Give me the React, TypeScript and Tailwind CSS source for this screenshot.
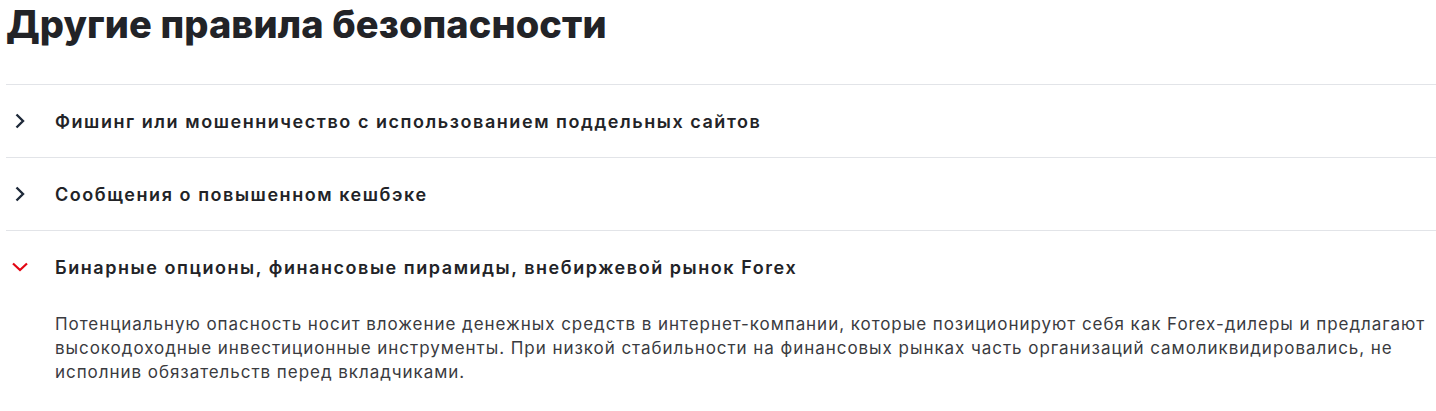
import React from "react";

const Chevron = ({ open }: { open: boolean }) =>
  open ? (
    <svg width="20" height="20" viewBox="0 0 20 20" fill="none" className="shrink-0">
      <path d="M3 6.5 L10 13 L17 6.5" stroke="#e30613" strokeWidth="2.2" />
    </svg>
  ) : (
    <svg width="20" height="20" viewBox="0 0 20 20" fill="none" className="shrink-0">
      <path d="M6.5 3.5 L13 10 L6.5 16.5" stroke="#1f2a3a" strokeWidth="2.4" />
    </svg>
  );

const items = [
  { title: "Фишинг или мошенничество с использованием поддельных сайтов", open: false },
  { title: "Сообщения о повышенном кешбэке", open: false },
  { title: "Бинарные опционы, финансовые пирамиды, внебиржевой рынок Forex", open: true },
];

export default function App() {
  return (
    <div className="bg-white w-[1436px] h-[411px] overflow-hidden pl-[6px]" style={{ fontFamily: "Inter, 'Liberation Sans', sans-serif" }}>
      <h1 className="text-[38px] leading-[48px] font-extrabold text-[#222327] pb-[36px] tracking-[0.1px]">
        Другие правила безопасности
      </h1>
      <div>
        {items.map((it, i) => (
          <div key={i} className="border-t border-[#e2e4e8]">
            <div className="flex items-center gap-[25px] pl-[4px] h-[72px]">
              <Chevron open={it.open} />
              <span className="text-[18px] font-semibold tracking-[1.55px] text-[#222327] pt-[1px]">{it.title}</span>
            </div>
            {it.open && (
              <p className="pl-[49px] pr-[6px] text-[17px] leading-[24px] tracking-[0.95px] text-[#3a3b3f] mt-[9px]">
                Потенциальную опасность носит вложение денежных средств в интернет-компании, которые позиционируют себя как Forex-дилеры и предлагают высокодоходные инвестиционные инструменты. При низкой стабильности на финансовых рынках часть организаций самоликвидировались, не исполнив обязательств перед вкладчиками.
              </p>
            )}
          </div>
        ))}
      </div>
    </div>
  );
}
